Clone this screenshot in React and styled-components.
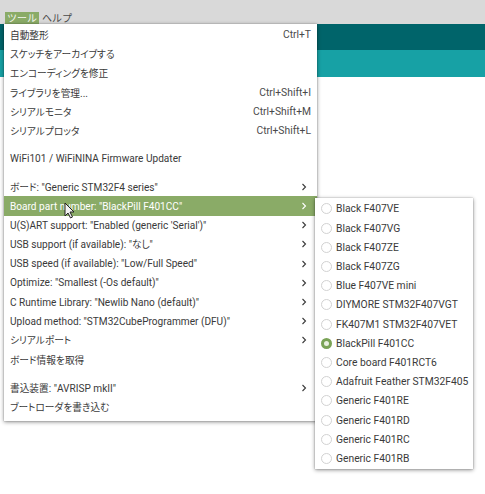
import React from "react";
import styled, { createGlobalStyle } from "styled-components";

const GlobalStyle = createGlobalStyle`
  html, body { margin: 0; padding: 0; background: #ffffff; }
  body {
    font-family: Roboto, "Noto Sans", "Noto Sans CJK JP", sans-serif;
    -webkit-font-smoothing: antialiased;
  }
`;

const Screen = styled.div`
  position: relative;
  width: 485px;
  height: 494px;
  overflow: hidden;
  background: #ffffff;
  display: flex;
  flex-direction: column;
`;

const MenuBar = styled.div`
  height: 24px;
  flex: none;
  background: #d9d9d9;
  display: flex;
  align-items: flex-end;
  padding-left: 5px;
  box-sizing: border-box;
`;

const MenuTitle = styled.div`
  height: 12px;
  padding: 0 2px;
  display: flex;
  align-items: center;
  font-family: "Noto Sans CJK JP", sans-serif;
  font-size: 10px;
  line-height: 12px;
  color: ${(p) => (p.$open ? "#f4f6ef" : "#4a4a4a")};
  background: ${(p) => (p.$open ? "#8aab67" : "transparent")};
  margin-right: 1px;
`;

const ToolBar = styled.div`
  height: 26px;
  flex: none;
  background: #00646a;
`;

const TabBar = styled.div`
  height: 27px;
  flex: none;
  background: #17a1a5;
`;

const Editor = styled.div`
  flex: 1;
  background: #ffffff;
`;

const DropMenu = styled.div`
  position: absolute;
  left: 4px;
  top: 24px;
  width: 313px;
  background: #ffffff;
  padding: 1.4px 0 4.4px;
  box-sizing: border-box;
  box-shadow: 0 1px 4px rgba(0, 0, 0, 0.45), 0 0 1px rgba(0, 0, 0, 0.35);
  display: flex;
  flex-direction: column;
`;

const Row = styled.div`
  height: 19.2px;
  flex: none;
  display: flex;
  align-items: center;
  padding: 0 6px;
  font-size: 10.1px;
  color: ${(p) => (p.$active ? "#ffffff" : "#3a3a3a")};
  background: ${(p) => (p.$active ? "#8aab67" : "transparent")};
  white-space: nowrap;
`;

const Label = styled.span`
  flex: 1;
`;

const Jp = styled.span`
  font-family: "Noto Sans CJK JP", sans-serif;
  font-size: 9.7px;
  font-feature-settings: "palt";
`;

const Shortcut = styled.span`
  color: #4a4a4a;
  font-size: 10.3px;
`;

const Arrow = styled.svg`
  width: 6px;
  height: 8px;
  margin-right: 4px;
  flex: none;
`;

const Spacer = styled.div`
  height: 8.8px;
  flex: none;
`;

const SubMenu = styled.div`
  position: absolute;
  left: 315px;
  top: 198px;
  width: 158px;
  background: #ffffff;
  padding: 1.4px 0 1px;
  box-sizing: border-box;
  box-shadow: 0 1px 4px rgba(0, 0, 0, 0.45), 0 0 1px rgba(0, 0, 0, 0.35);
  display: flex;
  flex-direction: column;
`;

const RadioRow = styled.div`
  height: 19.2px;
  flex: none;
  display: flex;
  align-items: center;
  gap: 4px;
  padding-left: 6px;
  font-size: 10.3px;
  color: #3a3a3a;
  white-space: nowrap;
`;

const Radio = styled.span`
  width: 11px;
  height: 11px;
  border-radius: 50%;
  box-sizing: border-box;
  flex: none;
  border: ${(p) => (p.$checked ? "3px solid #7aa356" : "1px solid #d2d2d2")};
  background: ${(p) => (p.$checked ? "#e9f0e0" : "#ffffff")};
`;

const Pointer = styled.svg`
  position: absolute;
  left: 64px;
  top: 202px;
  width: 11px;
  height: 17px;
`;

// Japanese runs are set in the CJK face at a slightly smaller size
const CJK_RUN = /([\u3000-\u30ff\u4e00-\u9fff\uff00-\uffef]+)/;
const Txt = ({ children }) =>
  children.split(CJK_RUN).map((part, i) =>
    i % 2 ? <Jp key={i}>{part}</Jp> : <React.Fragment key={i}>{part}</React.Fragment>
  );

const ChevronRight = () => (
  <Arrow viewBox="0 0 6 8">
    <path d="M1.5 1 L4.5 4 L1.5 7" fill="none" stroke="currentColor" strokeWidth="1.1" />
  </Arrow>
);

const groups = [
  [
    { label: "自動整形", shortcut: "Ctrl+T" },
    { label: "スケッチをアーカイブする" },
    { label: "エンコーディングを修正" },
    { label: "ライブラリを管理...", shortcut: "Ctrl+Shift+I" },
    { label: "シリアルモニタ", shortcut: "Ctrl+Shift+M" },
    { label: "シリアルプロッタ", shortcut: "Ctrl+Shift+L" },
  ],
  [{ label: "WiFi101 / WiFiNINA Firmware Updater" }],
  [
    { label: 'ボード: "Generic STM32F4 series"', sub: true },
    { label: 'Board part number: "BlackPill F401CC"', sub: true, active: true },
    { label: 'U(S)ART support: "Enabled (generic \'Serial\')"', sub: true },
    { label: 'USB support (if available): "なし"', sub: true },
    { label: 'USB speed (if available): "Low/Full Speed"', sub: true },
    { label: 'Optimize: "Smallest (-Os default)"', sub: true },
    { label: 'C Runtime Library: "Newlib Nano (default)"', sub: true },
    { label: 'Upload method: "STM32CubeProgrammer (DFU)"', sub: true },
    { label: "シリアルポート", sub: true },
    { label: "ボード情報を取得" },
  ],
  [
    { label: '書込装置: "AVRISP mkII"', sub: true },
    { label: "ブートローダを書き込む" },
  ],
];

const boards = [
  "Black F407VE",
  "Black F407VG",
  "Black F407ZE",
  "Black F407ZG",
  "Blue F407VE mini",
  "DIYMORE STM32F407VGT",
  "FK407M1 STM32F407VET",
  "BlackPill F401CC",
  "Core board F401RCT6",
  "Adafruit Feather STM32F405",
  "Generic F401RE",
  "Generic F401RD",
  "Generic F401RC",
  "Generic F401RB",
];

export default function App() {
  return (
    <>
      <GlobalStyle />
      <Screen>
        <MenuBar>
          <MenuTitle $open>ツール</MenuTitle>
          <MenuTitle>ヘルプ</MenuTitle>
        </MenuBar>
        <ToolBar />
        <TabBar />
        <Editor />

        <DropMenu>
          {groups.map((items, gi) => (
            <React.Fragment key={gi}>
              {gi > 0 && <Spacer />}
              {items.map((it) => (
                <Row key={it.label} $active={it.active}>
                  <Label>
                    <Txt>{it.label}</Txt>
                  </Label>
                  {it.shortcut && <Shortcut>{it.shortcut}</Shortcut>}
                  {it.sub && <ChevronRight />}
                </Row>
              ))}
            </React.Fragment>
          ))}
        </DropMenu>

        <SubMenu>
          {boards.map((b) => (
            <RadioRow key={b}>
              <Radio $checked={b === "BlackPill F401CC"} />
              {b}
            </RadioRow>
          ))}
        </SubMenu>

        <Pointer viewBox="0 0 11 17">
          <path
            d="M1 1 L1 14 L4 11 L6.5 16 L8.5 15 L6 10 L10 10 Z"
            fill="#f2f2f2"
            stroke="#222"
            strokeWidth="1"
            strokeLinejoin="round"
          />
        </Pointer>
      </Screen>
    </>
  );
}
